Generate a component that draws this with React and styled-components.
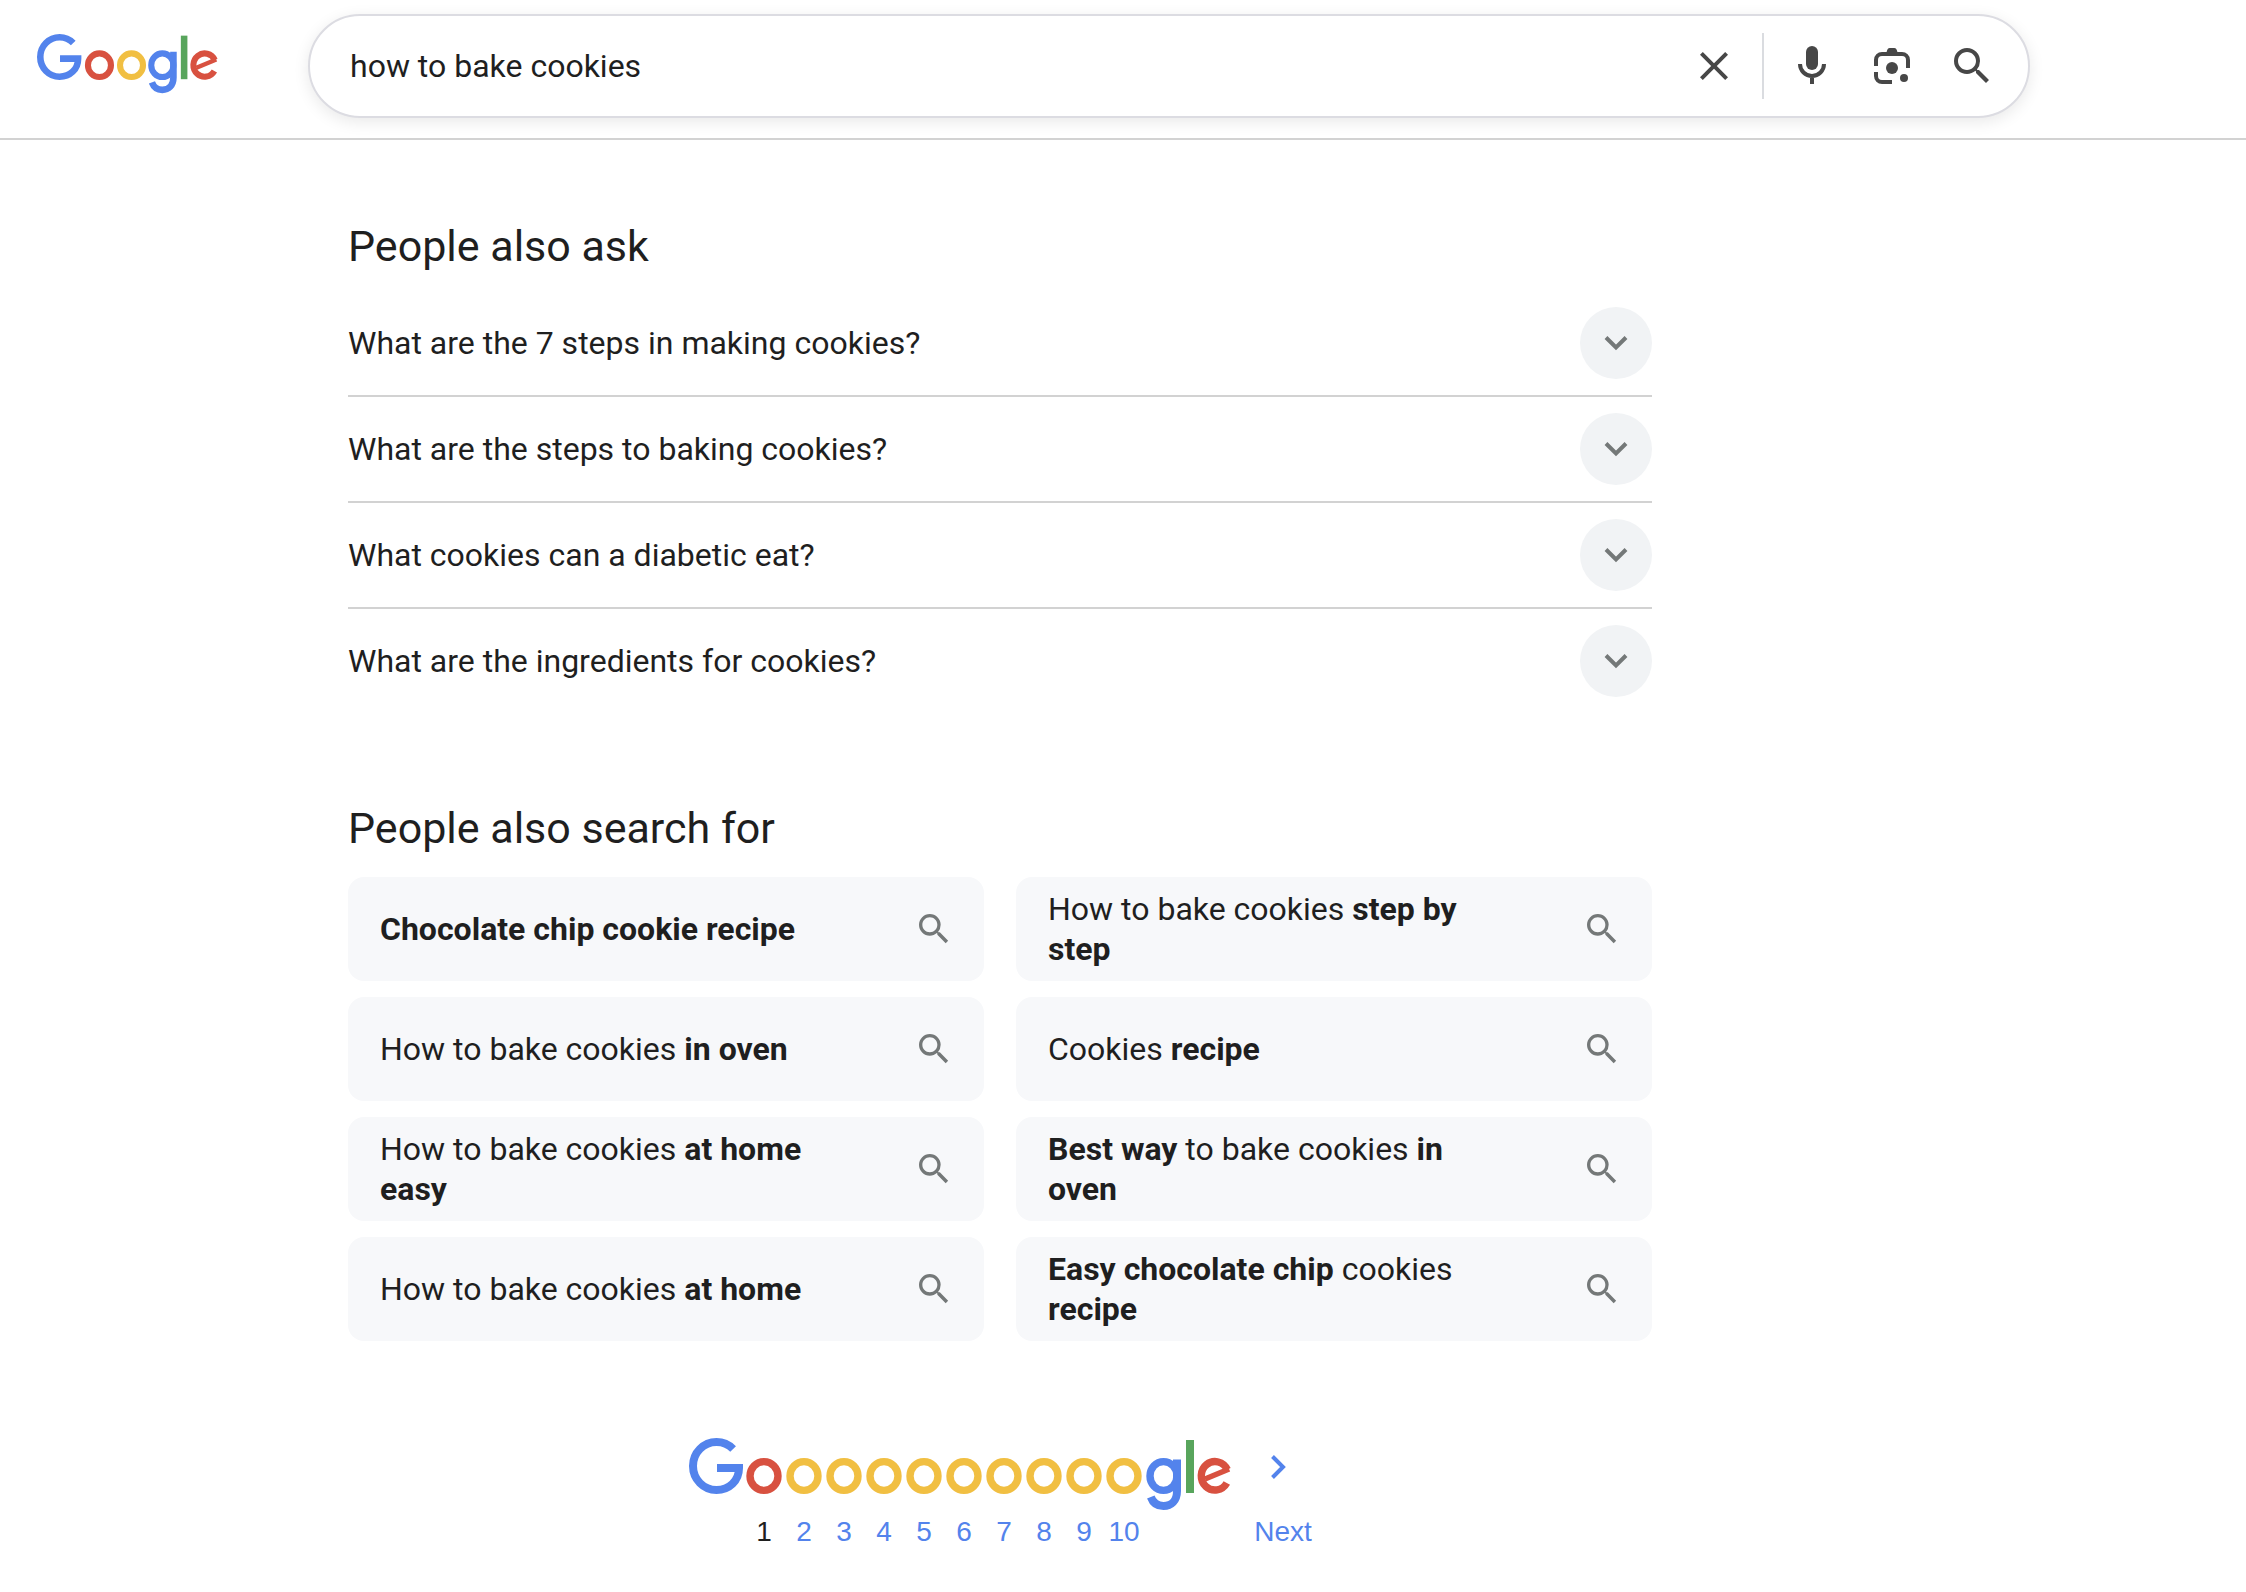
import React from "react";
import styled, { createGlobalStyle } from "styled-components";
import { MdClose, MdSearch } from "react-icons/md";

const color = {
  blue: "#5383ec",
  red: "#d85140",
  yellow: "#f1bf42",
  green: "#58a55c",
  text: "#1f1f1f",
  icon: "#474747",
  muted: "#747878",
  line: "#d2d2d2",
  card: "#f7f8fa",
};

const sans = `Roboto, "Liberation Sans", sans-serif`;
const arial = `"Liberation Sans", Arial, sans-serif`;

const GlobalStyle = createGlobalStyle`
  *, *::before, *::after { box-sizing: border-box; }
  body {
    margin: 0;
    background: #fff;
    color: ${color.text};
    font-family: ${sans};
    font-size: 32px;
    line-height: 40px;
  }
`;

const Header = styled.header`
  display: flex;
  align-items: flex-start;
  padding: 14px 216px 20px 36px;
  border-bottom: 2px solid ${color.line};
`;

const LogoLink = styled.a`
  display: block;
  flex: 0 0 272px;
  padding-top: 20px;
  line-height: 0;
`;

const SearchForm = styled.form`
  flex: 1;
  min-width: 0;
  height: 104px;
  display: flex;
  align-items: center;
  padding: 0 32px 0 40px;
  border: 2px solid #dcdce2;
  border-radius: 52px;
  background: #fff;
  box-shadow: 0 4px 16px rgba(0, 0, 0, 0.09);
`;

const SearchInput = styled.input`
  flex: 1;
  min-width: 0;
  padding: 0;
  border: 0;
  outline: 0;
  background: transparent;
  color: ${color.text};
  font: 32px/40px ${sans};
`;

const IconButton = styled.button`
  display: flex;
  padding: 0;
  border: 0;
  background: transparent;
  color: ${color.icon};
  cursor: pointer;
`;

const Tools = styled.div`
  display: flex;
  align-items: center;
  gap: 32px;
  height: 66px;
  margin-left: 24px;
  padding-left: 24px;
  border-left: 2px solid #dadce0;
`;

const Main = styled.main`
  width: 100%;
  max-width: 2000px;
  padding: 78px 348px 48px;
`;

const Section = styled.section`
  margin-bottom: ${(p) => p.$gap}px;
`;

const Title = styled.h2`
  margin: 0 0 ${(p) => p.$gap}px;
  font-size: 43px;
  font-weight: 400;
  line-height: 56px;
`;

const Question = styled.button`
  display: flex;
  width: 100%;
  align-items: center;
  justify-content: space-between;
  padding: 16px 0;
  border: 0;
  border-bottom: 2px solid ${color.line};
  background: transparent;
  color: inherit;
  font: inherit;
  text-align: left;
  cursor: pointer;

  &:last-child {
    border-bottom: 0;
  }
`;

const Circle = styled.span`
  display: flex;
  align-items: center;
  justify-content: center;
  width: 72px;
  height: 72px;
  border-radius: 50%;
  background: #f1f3f5;
`;

const Cards = styled.div`
  display: grid;
  grid-template-columns: 1fr 1fr;
  gap: 16px 32px;
`;

const Card = styled.a`
  display: flex;
  align-items: center;
  justify-content: space-between;
  gap: 80px;
  min-height: 104px;
  padding: 12px 30px 12px 32px;
  border-radius: 16px;
  background: ${color.card};
  color: inherit;
  text-decoration: none;

  svg {
    flex: none;
    color: ${color.muted};
  }
`;

const Pager = styled.nav`
  display: flex;
  justify-content: center;
  color: ${color.blue};
  font: 28px/32px ${arial};
`;

const PageLink = styled.a`
  display: flex;
  flex-direction: column;
  align-items: center;
  gap: 6px;
  width: 40px;
  color: ${(p) => (p.$current ? color.text : color.blue)};
  text-decoration: none;

  svg {
    display: block;
  }
`;

const NextLink = styled(PageLink)`
  width: auto;
  margin-left: 22px;
`;

function BigG() {
  return (
    <path
      d="M45.100 11A23.500 24 0 0 0 28.500 4A23.500 24 0 0 0 5 28A23.500 24 0 0 0 28.500 52C41 52 51 43 51 30H29"
      fill="none"
      stroke={color.blue}
      strokeWidth="8"
    />
  );
}

function Ring({ cx, stroke }) {
  return (
    <ellipse
      cx={cx}
      cy="38"
      rx="14"
      ry="14.4"
      fill="none"
      stroke={stroke}
      strokeWidth="7.4"
    />
  );
}

function LogoTail() {
  return (
    <g fill="none" strokeWidth="8">
      <ellipse cx="17.5" cy="38" rx="13.5" ry="14.4" stroke={color.blue} strokeWidth="7.4" />
      <path
        d="M31 21.500V53C31 63 25 68 17.500 68C11.500 68 7 65 4.800 59"
        stroke={color.blue}
      />
      <path d="M44 2V55" stroke={color.green} />
      <path
        d="M81.300 31.600A13.700 14.200 0 1 0 80.800 45"
        stroke={color.red}
        strokeWidth="7.4"
      />
      <path d="M59 41L83.100 31.100" stroke={color.red} strokeWidth="5.4" />
    </g>
  );
}

function Logo() {
  return (
    <svg width="182" height="60" viewBox="0 0 221 73" role="img" aria-label="Google">
      <BigG />
      <Ring cx="77" stroke={color.red} />
      <Ring cx="116" stroke={color.yellow} />
      <g transform="translate(136 0)">
        <LogoTail />
      </g>
    </svg>
  );
}

function MicIcon() {
  return (
    <svg width="48" height="48" viewBox="0 0 24 24" fill="currentColor" aria-hidden="true">
      <rect x="9" y="2" width="6" height="12" rx="3" />
      <path
        d="M6 11a6 6 0 0 0 12 0M12 17v4"
        fill="none"
        stroke="currentColor"
        strokeWidth="2"
      />
    </svg>
  );
}

function LensIcon() {
  return (
    <svg width="48" height="48" viewBox="0 0 24 24" fill="currentColor" aria-hidden="true">
      <path
        d="M4 12V9a3 3 0 0 1 3-3h10a3 3 0 0 1 3 3v4M4 15v2a3 3 0 0 0 3 3h5"
        fill="none"
        stroke="currentColor"
        strokeWidth="2"
      />
      <path d="M9 6L9.600 4Q9.900 3 10.800 3H13.200Q14.100 3 14.400 4L15 6Z" />
      <circle cx="12" cy="13" r="3" />
      <circle cx="18" cy="18" r="2" />
    </svg>
  );
}

function ChevronDown() {
  return (
    <svg width="24" height="16" viewBox="0 0 24 16" aria-hidden="true">
      <path d="M2 2.500L12 12.500L22 2.500" fill="none" stroke={color.muted} strokeWidth="4" />
    </svg>
  );
}

const questions = [
  "What are the 7 steps in making cookies?",
  "What are the steps to baking cookies?",
  "What cookies can a diabetic eat?",
  "What are the ingredients for cookies?",
];

const searches = [
  <b>Chocolate chip cookie recipe</b>,
  <>How to bake cookies <b>step by step</b></>,
  <>How to bake cookies <b>in oven</b></>,
  <>Cookies <b>recipe</b></>,
  <>How to bake cookies <b>at home easy</b></>,
  <><b>Best way</b> to bake cookies <b>in oven</b></>,
  <>How to bake cookies <b>at home</b></>,
  <><b>Easy chocolate chip</b> cookies <b>recipe</b></>,
];

const pages = [1, 2, 3, 4, 5, 6, 7, 8, 9, 10];

export default function App() {
  return (
    <>
      <GlobalStyle />
      <Header>
        <LogoLink href="#home">
          <Logo />
        </LogoLink>
        <SearchForm role="search" onSubmit={(e) => e.preventDefault()}>
          <SearchInput type="text" aria-label="Search" defaultValue="how to bake cookies" />
          <IconButton type="reset" aria-label="Clear">
            <MdClose size={48} />
          </IconButton>
          <Tools>
            <IconButton type="button" aria-label="Search by voice">
              <MicIcon />
            </IconButton>
            <IconButton type="button" aria-label="Search by image">
              <LensIcon />
            </IconButton>
            <IconButton type="submit" aria-label="Search">
              <MdSearch size={48} />
            </IconButton>
          </Tools>
        </SearchForm>
      </Header>
      <Main>
        <Section $gap={87}>
          <Title $gap={17}>People also ask</Title>
          {questions.map((q) => (
            <Question key={q} type="button" aria-expanded="false">
              {q}
              <Circle>
                <ChevronDown />
              </Circle>
            </Question>
          ))}
        </Section>
        <Section $gap={97}>
          <Title $gap={21}>People also search for</Title>
          <Cards>
            {searches.map((label, i) => (
              <Card key={i} href="#search">
                <span>{label}</span>
                <MdSearch size={40} />
              </Card>
            ))}
          </Cards>
        </Section>
        <Pager aria-label="Result pages">
          <svg width="56" height="72" viewBox="0 0 56 72" aria-hidden="true">
            <BigG />
          </svg>
          {pages.map((n) => (
            <PageLink
              key={n}
              href={`#page-${n}`}
              $current={n === 1}
              aria-current={n === 1 ? "page" : undefined}
            >
              <svg width="40" height="72" viewBox="0 0 40 72" aria-hidden="true">
                <Ring cx="20" stroke={n === 1 ? color.red : color.yellow} />
              </svg>
              {n}
            </PageLink>
          ))}
          <svg width="88" height="73" viewBox="-2 0 88 73" aria-hidden="true">
            <LogoTail />
          </svg>
          <NextLink href="#next">
            <svg width="58" height="72" viewBox="0 0 58 72" aria-hidden="true">
              <path
                d="M18.500 18.500L29 29L18.500 39.500"
                fill="none"
                stroke={color.blue}
                strokeWidth="4"
              />
            </svg>
            Next
          </NextLink>
        </Pager>
      </Main>
    </>
  );
}
